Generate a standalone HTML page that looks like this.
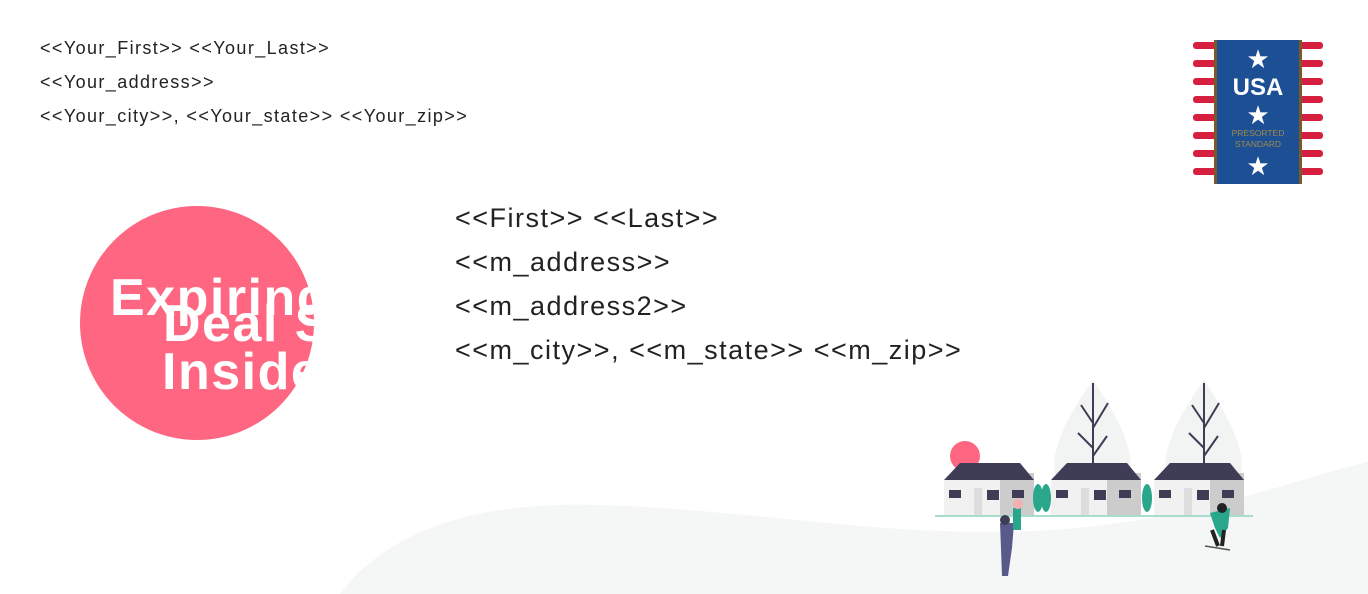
<!DOCTYPE html>
<html><head><meta charset="utf-8"><style>
body{margin:0;width:1368px;height:594px;overflow:hidden;background:#fff;position:relative;font-family:"Liberation Sans",sans-serif;color:#222}
.ret{position:absolute;left:40px;top:31px;font-size:18px;line-height:34px;letter-spacing:1.4px}
.rec{position:absolute;left:455px;top:196px;font-size:27px;line-height:44px;color:#222;letter-spacing:1.5px}
.circ{position:absolute;left:80px;top:206px;width:234px;height:234px;overflow:hidden}
.circ .c{position:absolute;left:0;top:0;width:234px;height:234px;border-radius:50%;background:#fe6682}
.circ span{position:absolute;color:#fff;font-weight:bold;font-size:52px;white-space:nowrap;letter-spacing:1.5px}
</style></head><body>
<svg style="position:absolute;left:0;top:0" width="1368" height="594">
<path d="M340 594 C380 540 460 500 600 505 C760 510 900 540 1050 530 C1200 520 1290 480 1368 462 L1368 594 Z" fill="#f4f7f6"/>
</svg>
<div class="ret">&lt;&lt;Your_First&gt;&gt; &lt;&lt;Your_Last&gt;&gt;<br>&lt;&lt;Your_address&gt;&gt;<br>&lt;&lt;Your_city&gt;&gt;, &lt;&lt;Your_state&gt;&gt; &lt;&lt;Your_zip&gt;&gt;</div>
<div class="rec">&lt;&lt;First&gt;&gt; &lt;&lt;Last&gt;&gt;<br>&lt;&lt;m_address&gt;&gt;<br>&lt;&lt;m_address2&gt;&gt;<br>&lt;&lt;m_city&gt;&gt;, &lt;&lt;m_state&gt;&gt; &lt;&lt;m_zip&gt;&gt;</div>
<div class="circ"><div class="c"></div>
<span style="left:30px;top:62px">Expiring</span>
<span style="left:83px;top:88px">Deal S</span>
<span style="left:82px;top:136px">Inside</span>
</div>
<svg style="position:absolute;left:1190px;top:40px" width="136" height="144">
<g fill="#d7203f">
<rect x="3" y="2" width="130" height="7" rx="3"/><rect x="3" y="20" width="130" height="7" rx="3"/><rect x="3" y="38" width="130" height="7" rx="3"/><rect x="3" y="56" width="130" height="7" rx="3"/><rect x="3" y="74" width="130" height="7" rx="3"/><rect x="3" y="92" width="130" height="7" rx="3"/><rect x="3" y="110" width="130" height="7" rx="3"/><rect x="3" y="128" width="130" height="7" rx="3"/>
</g>
<rect x="24" y="0" width="88" height="144" fill="#7a5a2a"/>
<rect x="27" y="0" width="82" height="144" fill="#1c4f93"/>
<g fill="#fff" font-family="Liberation Sans" text-anchor="middle">
<text x="68" y="28" font-size="26">★</text>
<text x="68" y="55" font-size="24" font-weight="bold">USA</text>
<text x="68" y="84" font-size="26">★</text>
<text x="68" y="135" font-size="26">★</text>
</g>
<g fill="#a08a4a" font-family="Liberation Sans" text-anchor="middle" font-size="8.5"><text x="68" y="96">PRESORTED</text><text x="68" y="107">STANDARD</text></g>
</svg>
<svg style="position:absolute;left:930px;top:378px" width="330" height="205">
<path d="M163 2 C140 35 120 70 125 95 C130 115 190 115 200 95 C205 70 185 35 163 2Z" fill="#f1f4f3"/>
<path d="M274 2 C251 35 231 70 236 95 C241 115 301 115 311 95 C316 70 296 35 274 2Z" fill="#f1f4f3"/>
<g stroke="#3f3d56" stroke-width="2" fill="none"><path d="M163 5V95M163 45l-12-18M163 50l15-25M163 70l-15-15M163 78l14-20"/><path d="M274 5V95M274 45l-12-18M274 50l15-25M274 70l-15-15M274 78l14-20"/></g>
<circle cx="35" cy="78" r="15" fill="#fe6682"/>
<g id="h"><rect x="14" y="102" width="90" height="36" fill="#f1f1f1"/><rect x="70" y="95" width="34" height="43" fill="#ccc"/><path d="M14 102 L30 85 L90 85 L104 102Z" fill="#3f3d56"/><rect x="44" y="110" width="8" height="28" fill="#ddd"/><rect x="57" y="112" width="12" height="10" fill="#3f3d56"/><rect x="19" y="112" width="12" height="8" fill="#3f3d56"/><rect x="82" y="112" width="12" height="8" fill="#3f3d56"/></g>
<use href="#h" x="107"/><use href="#h" x="210"/>
<rect x="5" y="137" width="318" height="2" fill="#a8dccc"/>
<ellipse cx="108" cy="120" rx="5" ry="14" fill="#2aa78a"/><ellipse cx="116" cy="120" rx="5" ry="14" fill="#2aa78a"/><ellipse cx="217" cy="120" rx="5" ry="14" fill="#2aa78a"/>
<path d="M70 145 L84 145 L82 170 L78 198 L72 198Z" fill="#5a5a8a"/><circle cx="75" cy="142" r="5" fill="#3f3d56"/><rect x="83" y="130" width="8" height="22" fill="#2aa78a"/><circle cx="88" cy="126" r="5" fill="#f4b0b0"/>
<path d="M280 135 L300 130 L298 150 L290 160 L285 150Z" fill="#2aa78a"/><circle cx="292" cy="130" r="5" fill="#222"/><path d="M282 152 L288 168 M294 152 L292 168" stroke="#222" stroke-width="4" fill="none"/><path d="M275 168 L300 172" stroke="#555" stroke-width="1.5"/>
</svg>
</body></html>
